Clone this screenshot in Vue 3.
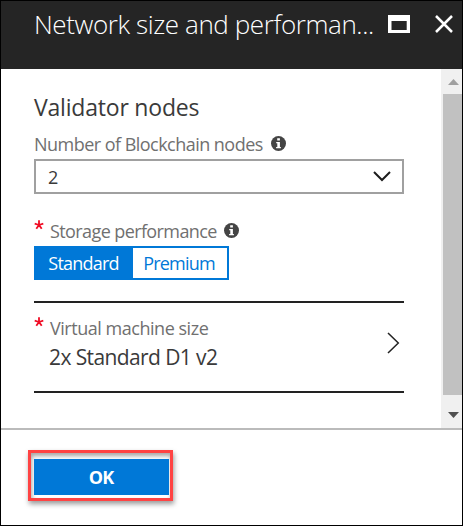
<script setup>
import { ref } from 'vue'

const storage = ref('Standard')
const options = ['Standard', 'Premium']
</script>

<template>
  <div class="blade">
    <header class="header">
      <h1 class="title">Network size and performan...</h1>
      <svg class="maximize" width="22" height="18" viewBox="0 0 22 18">
        <path fill="#fff" fill-rule="evenodd" d="M0 0H22V18H0ZM3.5 6V15H18.7V6Z" />
      </svg>
      <svg class="close" width="18" height="18" viewBox="0 0 18 18">
        <path d="M1 1L17 17M17 1L1 17" fill="none" stroke="#fff" stroke-width="2.5" />
      </svg>
    </header>

    <main class="body">
      <section class="content">
        <h2 class="heading">Validator nodes</h2>
        <div class="label nodes-label">
          <span>Number of Blockchain nodes</span>
          <svg class="info" width="15" height="15" viewBox="0 0 15 15">
            <circle cx="7.5" cy="7.5" r="7.5" fill="#444" />
            <path fill="#fff" d="M6.2 2.2H8.9V4.6H6.2ZM5.2 6H8.9V11H9.9V12.3H5.1V11H6.3V7.2H5.2Z" />
          </svg>
        </div>
        <div class="select">
          <span>2</span>
          <svg width="18" height="11" viewBox="0 0 18 11">
            <path d="M1 1L9 9L17 1" fill="none" stroke="#1c1c1c" stroke-width="2" />
          </svg>
        </div>

        <div class="label storage-label">
          <svg class="star" width="10" height="10" viewBox="0 0 10 10">
            <path d="M5 5V.3M5 5L.7 3.7M5 5L9.3 3.7M5 5L2.3 8.8M5 5L7.7 8.8" stroke="#f00c24" stroke-width="1.8" />
          </svg>
          <span>Storage performance</span>
          <svg class="info" width="15" height="15" viewBox="0 0 15 15">
            <circle cx="7.5" cy="7.5" r="7.5" fill="#444" />
            <path fill="#fff" d="M6.2 2.2H8.9V4.6H6.2ZM5.2 6H8.9V11H9.9V12.3H5.1V11H6.3V7.2H5.2Z" />
          </svg>
        </div>
        <div class="toggle">
          <button
            v-for="option in options"
            :key="option"
            :class="['option', option.toLowerCase(), { active: storage === option }]"
            @click="storage = option"
          >{{ option }}</button>
        </div>

        <div class="picker">
          <div class="picker-text">
            <div class="label vm-label">
              <svg class="star" width="10" height="10" viewBox="0 0 10 10">
                <path d="M5 5V.3M5 5L.7 3.7M5 5L9.3 3.7M5 5L2.3 8.8M5 5L7.7 8.8" stroke="#f00c24" stroke-width="1.8" />
              </svg>
              <span>Virtual machine size</span>
            </div>
            <div class="vm-value">2x Standard D1 v2</div>
          </div>
          <svg class="next" width="13" height="22" viewBox="0 0 13 22">
            <path d="M1 1L11.3 11L1 21" fill="none" stroke="#222" stroke-width="1.5" />
          </svg>
        </div>
      </section>

      <aside class="scrollbar">
        <svg width="11" height="6" viewBox="0 0 11 6"><path d="M5.5 0L11 6H0Z" fill="#a0a0a0" /></svg>
        <div class="thumb"></div>
        <svg width="11" height="6" viewBox="0 0 11 6"><path d="M0 0H11L5.5 6Z" fill="#505050" /></svg>
      </aside>
    </main>

    <footer class="footer">
      <div class="highlight">
        <button class="ok">OK</button>
      </div>
    </footer>
  </div>
</template>

<style>
body {
  margin: 0;
}
</style>

<style scoped>
* {
  box-sizing: border-box;
}
.blade {
  display: flex;
  flex-direction: column;
  width: 463px;
  height: 526px;
  border: 1px solid #000;
  background: #fff;
  font-family: "Open Sans", "Noto Sans", sans-serif;
  overflow: hidden;
  white-space: nowrap;
}
svg {
  display: block;
  flex: none;
}
button {
  font-family: inherit;
  border: 0;
  padding: 0;
  margin: 0;
}
.header {
  display: flex;
  flex: none;
  height: 68px;
  padding-left: 33px;
  background: #252525;
  color: #fff;
}
.title {
  width: 354px;
  margin: 0;
  padding-top: 5px;
  font-size: 26px;
  line-height: 36px;
  font-weight: 300;
  letter-spacing: -0.4px;
}
.maximize {
  margin-top: 14px;
}
.close {
  margin: 14px 0 0 25px;
}
.body {
  display: flex;
  flex: none;
  height: 359px;
}
.content {
  width: 440px;
  padding: 21px 37px 0 33px;
}
.heading {
  margin: 0;
  height: 40px;
  font-size: 23px;
  line-height: 34px;
  font-weight: 400;
  color: #3a3a3a;
  letter-spacing: -0.2px;
}
.label {
  display: flex;
  height: 28px;
  line-height: 27px;
  font-size: 18px;
  color: #707070;
  letter-spacing: -0.47px;
}
.nodes-label {
  height: 29px;
  line-height: 29px;
  letter-spacing: -0.53px;
}
.info {
  margin: 5px 0 0 7px;
}
.nodes-label .info {
  margin: 6px 0 0 8px;
}
.select {
  display: flex;
  align-items: center;
  justify-content: space-between;
  height: 35px;
  padding: 0 11px 0 12px;
  border: 2px solid #a0a0a0;
  font-size: 18px;
  color: #3a3a3a;
}
.storage-label {
  margin-top: 24px;
  line-height: 26px;
  letter-spacing: -0.6px;
}
.star {
  margin: 2px 6px 0 0;
}
.toggle {
  display: flex;
  width: 195px;
  height: 34px;
  border: 2px solid #0078d7;
}
.option {
  height: 30px;
  font-size: 18px;
  line-height: 30px;
  font-weight: 400;
  color: #0078d7;
  background: #fff;
  letter-spacing: -0.8px;
}
.standard {
  width: 97px;
  padding-right: 2px;
}
.premium {
  width: 94px;
  padding-right: 2px;
}
.option.active {
  background: #0078d7;
  color: #fff;
}
.picker {
  display: flex;
  justify-content: space-between;
  height: 92px;
  margin-top: 21px;
  border-top: 2px solid #222;
  border-bottom: 2px solid #222;
}
.vm-label {
  margin-top: 12px;
}
.vm-value {
  padding-left: 15px;
  font-size: 21px;
  line-height: 28px;
  color: #3a3a3a;
  letter-spacing: -0.6px;
}
.next {
  margin: 29px 4px 0 0;
}
.scrollbar {
  display: flex;
  flex-direction: column;
  align-items: center;
  width: 21px;
  padding-top: 10px;
  background: #f0f0f0;
}
.scrollbar svg {
  margin-left: 3px;
}
.thumb {
  width: 19px;
  height: 301px;
  margin: 9px 0 17px 2px;
  background: #c1c1c1;
}
.footer {
  flex: 1;
  padding: 20px 27px;
  border-top: 2px solid #bbb;
}
.highlight {
  width: 145px;
  height: 51px;
  padding: 6px 1px 3px 3px;
  border: 3px solid #ff4343;
  box-shadow: 1px 3px 5px rgba(0, 0, 0, 0.4), inset 1px 3px 4px rgba(0, 0, 0, 0.35);
}
.ok {
  display: block;
  width: 135px;
  height: 36px;
  padding-right: 1px;
  background: #0078d7;
  color: #fff;
  font-size: 18px;
  line-height: 36px;
  font-weight: 700;
  letter-spacing: -0.9px;
}
</style>
